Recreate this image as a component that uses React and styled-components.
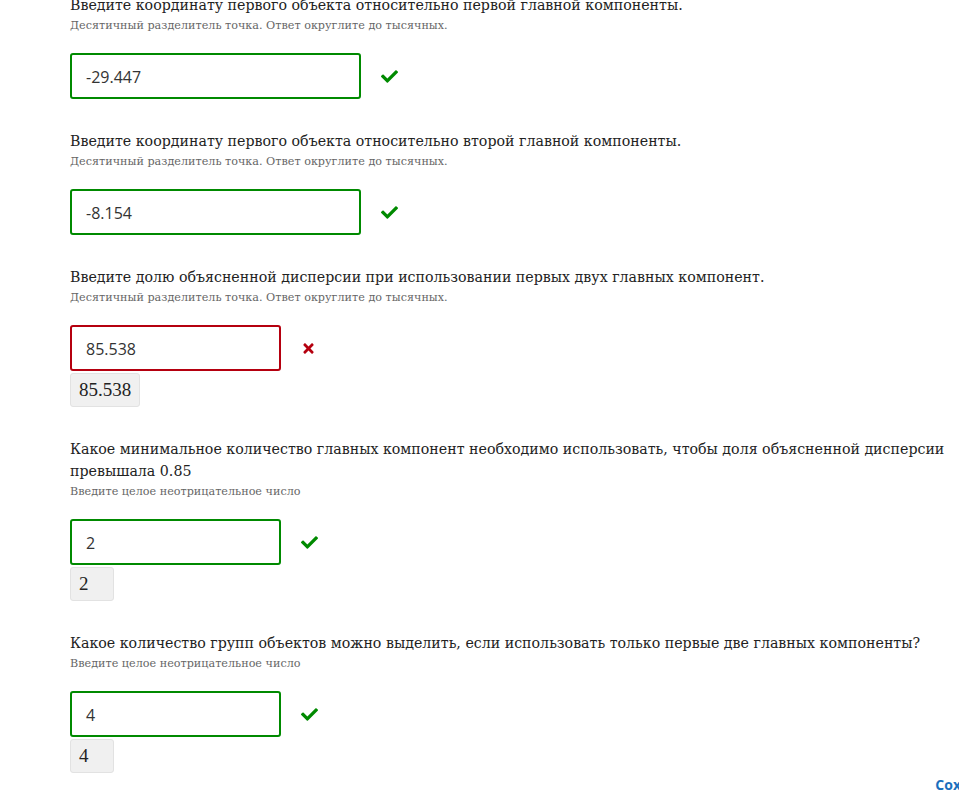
import styled, { createGlobalStyle } from "styled-components";
import { FaCheck, FaTimes } from "react-icons/fa";

const GlobalStyle = createGlobalStyle`
  html, body {
    margin: 0;
    padding: 0;
    background: #fff;
    overflow: hidden;
  }
`;

const Page = styled.div`
  width: 1014px;
  margin-top: -6px;
  padding-left: 70px;
  box-sizing: border-box;
`;

const Question = styled.div`
  margin-bottom: 31px;
`;

const Title = styled.div`
  font-family: "DejaVu Serif", "Liberation Serif", serif;
  font-size: 14.2px;
  line-height: 22px;
  color: #222;
  max-width: 885px;
`;

const Hint = styled.div`
  font-family: "DejaVu Serif", "Liberation Serif", serif;
  font-size: 11.2px;
  line-height: 20px;
  color: #666;
`;

const InputRow = styled.div`
  display: flex;
  align-items: center;
  gap: 20px;
  margin-top: 17px;
`;

const Field = styled.div`
  box-sizing: border-box;
  flex: none;
  width: ${(p) => (p.$wide ? "291px" : "211px")};
  height: 46px;
  border: 2px solid ${(p) => (p.$wrong ? "#b5000f" : "#008a00")};
  border-radius: 3px;
  padding: 2px 0 0 14px;
  display: flex;
  align-items: center;
  font-family: "Open Sans", "Liberation Sans", sans-serif;
  font-size: 16px;
  color: #333;
`;

const Mark = styled.span`
  display: flex;
  font-size: ${(p) => (p.$wrong ? "15px" : "17px")};
  color: ${(p) => (p.$wrong ? "#b5000f" : "#008a00")};
`;

const Answer = styled.div`
  width: fit-content;
  box-sizing: border-box;
  min-width: 44px;
  height: 34px;
  margin-top: 2px;
  padding: 0 8px;
  background: #f0f0f0;
  border: 1px solid #e2e2e2;
  border-radius: 3px;
  font-family: "Liberation Serif", "DejaVu Serif", serif;
  font-size: 19px;
  line-height: 32px;
  color: #222;
`;

const Footer = styled.div`
  display: flex;
  justify-content: flex-end;
  margin-top: -29px;
`;

const SaveLink = styled.a`
  font-family: "Open Sans", "Liberation Sans", sans-serif;
  font-weight: 700;
  font-size: 14px;
  color: #1a6fbd;
  text-decoration: none;
  cursor: pointer;
`;

const hint = "Десятичный разделитель точка. Ответ округлите до тысячных.";
const hintInt = "Введите целое неотрицательное число";

const questions = [
  {
    title: "Введите координату первого объекта относительно первой главной компоненты.",
    hint,
    value: "-29.447",
    wide: true,
  },
  {
    title: "Введите координату первого объекта относительно второй главной компоненты.",
    hint,
    value: "-8.154",
    wide: true,
  },
  {
    title: "Введите долю объясненной дисперсии при использовании первых двух главных компонент.",
    hint,
    value: "85.538",
    wrong: true,
    answer: "85.538",
  },
  {
    title:
      "Какое минимальное количество главных компонент необходимо использовать, чтобы доля объясненной дисперсии превышала 0.85",
    hint: hintInt,
    value: "2",
    answer: "2",
  },
  {
    title:
      "Какое количество групп объектов можно выделить, если использовать только первые две главных компоненты?",
    hint: hintInt,
    value: "4",
    answer: "4",
  },
];

function QuestionBlock({ q }) {
  return (
    <Question>
      <Title>{q.title}</Title>
      <Hint>{q.hint}</Hint>
      <InputRow>
        <Field $wide={q.wide} $wrong={q.wrong}>
          {q.value}
        </Field>
        <Mark $wrong={q.wrong}>{q.wrong ? <FaTimes /> : <FaCheck />}</Mark>
      </InputRow>
      {q.answer && <Answer>{q.answer}</Answer>}
    </Question>
  );
}

export default function App() {
  return (
    <>
      <GlobalStyle />
      <Page>
        {questions.map((q, i) => (
          <QuestionBlock key={i} q={q} />
        ))}
        <Footer>
          <SaveLink>Сохранить</SaveLink>
        </Footer>
      </Page>
    </>
  );
}
